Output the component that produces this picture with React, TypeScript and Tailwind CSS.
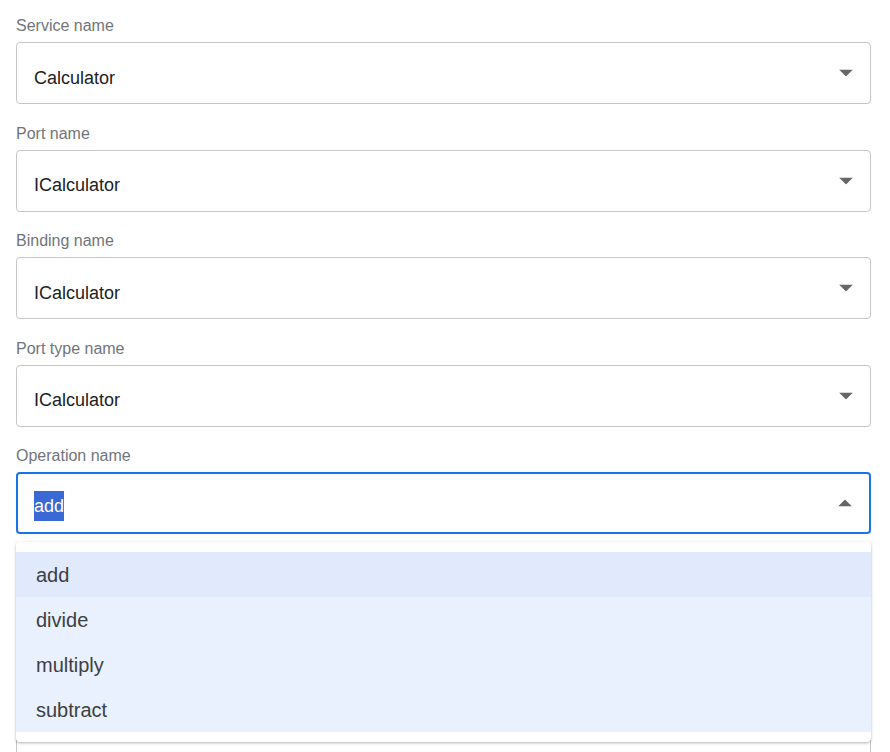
import { useState } from "react";

const fields = [
  { label: "Service name", value: "Calculator" },
  { label: "Port name", value: "ICalculator" },
  { label: "Binding name", value: "ICalculator" },
  { label: "Port type name", value: "ICalculator" },
];

const operations = ["add", "divide", "multiply", "subtract"];

function Caret({ up = false }: { up?: boolean }) {
  return (
    <svg width="14" height="7" viewBox="0 0 14 7" className="absolute right-[17px] top-1/2 -translate-y-1/2">
      {up ? <path d="M0 7 L14 7 L7 0 Z" fill="#666" /> : <path d="M0 0 L14 0 L7 7 Z" fill="#666" />}
    </svg>
  );
}

function SelectField({ label, value }: { label: string; value: string }) {
  return (
    <div className="mb-[21.5px]">
      <div className="h-[24px] text-[16px] leading-[16px] text-[#70757a]">{label}</div>
      <div className="relative flex h-[62px] items-center rounded-[4px] border border-[#c6c6c6] bg-white pl-[17px] pt-[10px] text-[18px] text-[#202124]">
        {value}
        <Caret />
      </div>
    </div>
  );
}

export default function App() {
  const [hovered, setHovered] = useState(0);

  return (
    <div className="h-[752px] overflow-hidden bg-white" style={{ fontFamily: '"Liberation Sans", Arial, sans-serif' }}>
      <div className="ml-4 w-[855px] pt-[18px]">
        {fields.map((f) => (
          <SelectField key={f.label} label={f.label} value={f.value} />
        ))}

        {/* open combobox */}
        <div className="relative mb-[21.5px]">
          <div className="h-[24px] text-[16px] leading-[16px] text-[#70757a]">Operation name</div>
          <div className="relative flex h-[62px] items-center rounded-[4px] border-2 border-[#1a73e8] bg-white pl-[16px] pt-[6px] text-[18px] text-[#202124]">
            <span className="bg-[#3a68d4] leading-[30px] text-white">add</span>
            <Caret up />
          </div>

          <div className="absolute left-0 right-0 top-[94px] z-10 rounded-[4px] bg-white py-[10px] shadow-[0_1px_3px_rgba(0,0,0,0.3)]">
            {operations.map((op, i) => (
              <div
                key={op}
                onMouseEnter={() => setHovered(i)}
                className={`flex h-[45px] items-center pl-[20px] text-[20px] text-[#3c4043] ${
                  hovered === i ? "bg-[#e0eafc]" : "bg-[#e9f0fe]"
                }`}
              >
                {op}
              </div>
            ))}
          </div>
        </div>

        {/* fields under the open list */}
        <SelectField label="" value="" />
        <div className="h-[24px]" />
        <div className="h-[80px] rounded-[4px] border border-[#c6c6c6] bg-white" />
      </div>
    </div>
  );
}
